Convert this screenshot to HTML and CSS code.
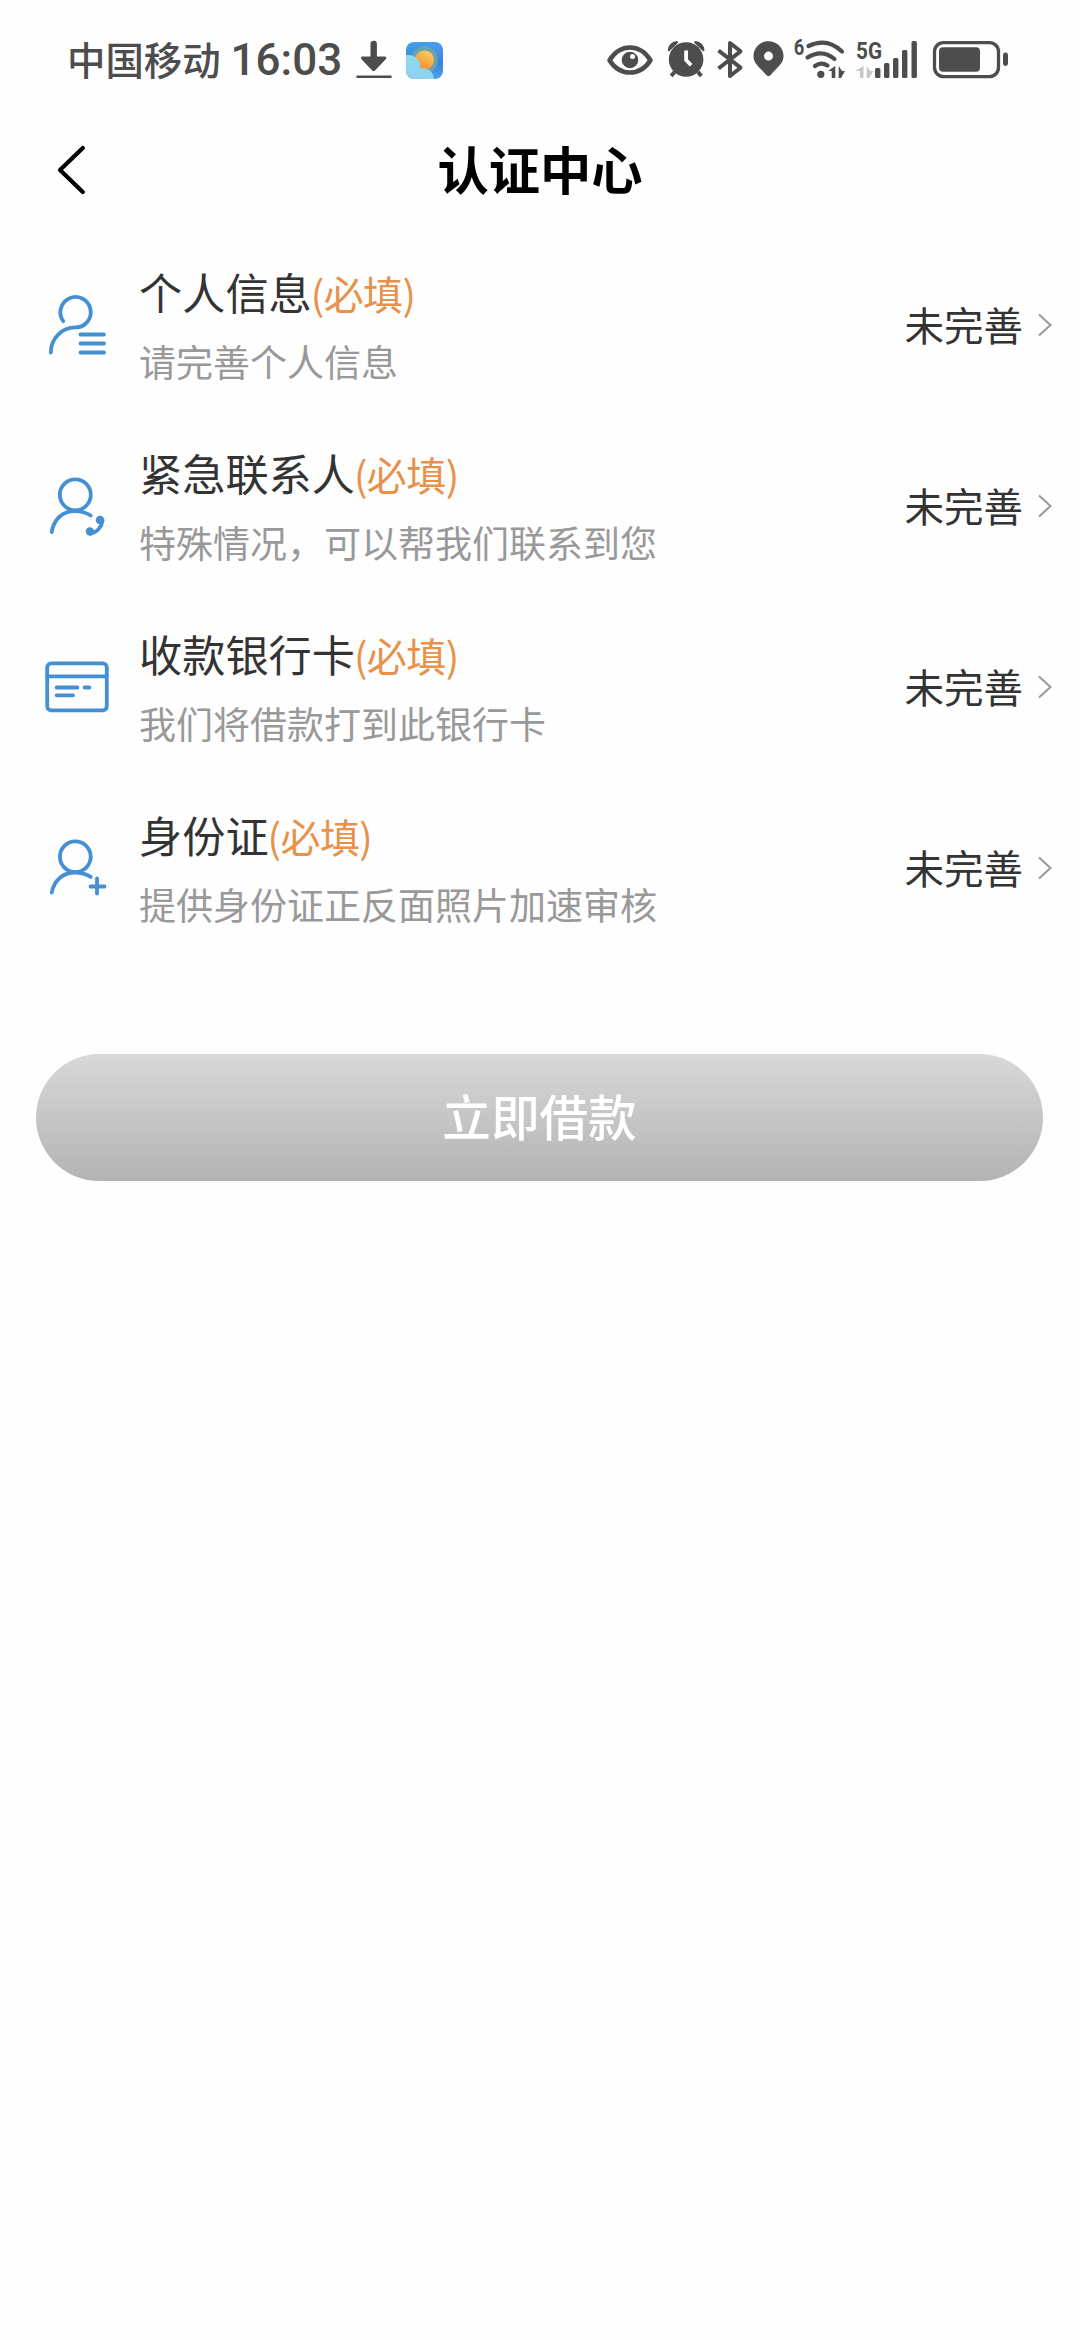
FILE: index.html
```html
<!DOCTYPE html>
<html lang="zh-CN">
<head>
<meta charset="utf-8">
<title>认证中心</title>
<link rel="stylesheet" href="styles.css">
</head>
<body>
<div class="status">
  <span class="carrier">中国移动</span>
  <span class="time">16:03</span>
  <svg class="download" width="36" height="42" viewBox="356 38 36 42"><path d="M370.500 44a3.200 3.200 0 0 1 6.400 0V56.500h8q2.500.5.800 2.800L375 70.500q-1.400 1.300-2.800 0L361.500 59.300q-1.500-2.400.8-2.800h8.200z" fill="#4d4d4d"/><path d="M356.500 76.700h35" stroke="#4d4d4d" stroke-width="2.400"/></svg>
  <svg class="weather" width="37" height="42" viewBox="406 38 37 42">
    <defs>
      <linearGradient id="sky" x1="0" y1="0" x2="0" y2="1"><stop offset="0" stop-color="#45a0e8"/><stop offset=".6" stop-color="#3c82dc"/><stop offset="1" stop-color="#4aa4ef"/></linearGradient>
      <linearGradient id="sun" x1=".8" y1="0" x2=".3" y2="1"><stop offset="0" stop-color="#f6d264"/><stop offset="1" stop-color="#f58a2c"/></linearGradient>
      <linearGradient id="cloud" x1="0" y1="0" x2="0" y2="1"><stop offset="0" stop-color="#8cdcec"/><stop offset="1" stop-color="#8fd0f0"/></linearGradient>
      <clipPath id="tile"><rect x="406" y="42" width="37" height="37" rx="8"/></clipPath>
    </defs>
    <g clip-path="url(#tile)"><rect x="406" y="42" width="37" height="37" fill="url(#sky)"/><circle cx="424.500" cy="60" r="13.500" fill="#77a99f" opacity=".75"/><circle cx="424.500" cy="60" r="9.500" fill="url(#sun)"/><path d="M406 55c9-1 15 5 14.500 13.500C428 67 433.500 72 434 79h-28z" fill="url(#cloud)"/></g>
  </svg>
  <span class="spacer"></span>
  <svg class="eye" width="46" height="42" viewBox="607.500 38 46 42"><path d="M610 60.200C614 54 621 47.500 630.500 47.500S647 54 651 60.200C647 66.500 640 72.500 630.500 72.500S614 66.500 610 60.200z" fill="none" stroke="#4d4d4d" stroke-width="4.600" stroke-linejoin="round"/><circle cx="630.500" cy="60" r="8.300" fill="#4d4d4d"/><circle cx="633" cy="56.500" r="2.500" fill="#fff"/></svg>
  <svg class="alarm" width="38" height="42" viewBox="667.500 38 38 42"><g fill="#4d4d4d"><path d="M668.300 50.500a9.500 9.500 0 0 1 9.500-9.500l1 1.600-9.300 8.900zM705 50.500a9.500 9.500 0 0 0-9.500-9.500l-1 1.600 9.300 8.900z"/><circle cx="686.600" cy="59.500" r="17.300"/></g><path d="M675 72l-3.300 4M698.500 72l3.300 4" stroke="#4d4d4d" stroke-width="4"/><path d="M686.600 50.500v9.500l5 5.300" fill="none" stroke="#fff" stroke-width="3.800"/></svg>
  <svg class="bluetooth" width="26" height="42" viewBox="717.500 38 26 42"><path d="M719 50.500L741 67.700 730.500 76V43L741 51.300 719 68.500" fill="none" stroke="#4d4d4d" stroke-width="4" stroke-linejoin="round"/></svg>
  <svg class="pin" width="31" height="42" viewBox="753.500 38 31 42"><path fill-rule="evenodd" d="M769 41.300c-8.400 0-15 6.500-15 14.800C754 64 760 67 766.300 74.500q2.700 3 5.400 0C778 67 784 64 784 56.100c0-8.300-6.600-14.800-15-14.800zM769 51.600a4.500 4.500 0 1 1 0 9 4.500 4.500 0 0 1 0-9z" fill="#4d4d4d"/></svg>
  <svg class="wifi" width="52" height="50" viewBox="795 34 52 50"><text class="net" x="794.700" y="55.300" font-size="22" textLength="10.600" lengthAdjust="spacingAndGlyphs">6</text><g fill="none" stroke="#4d4d4d" stroke-width="4.200" stroke-linecap="round"><path d="M809.500 46Q828 37 843 51.500M808.500 57.500Q823 48.500 835.500 59M816 66Q822 61.500 828.500 65.500"/></g><circle cx="821.800" cy="74.300" r="3.600" fill="#4d4d4d"/><path d="M836.300 66v12h-3.600v-7h-3.700zM839.700 66v12h2.300l4-7h-3z" fill="#4d4d4d"/></svg>
  <svg class="signal" width="63" height="50" viewBox="856 34 63 50"><text class="net" x="857" y="59" font-size="24.500" textLength="26" lengthAdjust="spacingAndGlyphs">5G</text><path d="M864.500 66v12h-3.600v-7H856zM867.700 66v12h2.300l4.500-7h-3z" fill="#c8c8c8"/><g fill="#4d4d4d"><rect x="876" y="68" width="5.400" height="10" rx="1.500"/><rect x="885" y="63" width="5.400" height="15" rx="1.500"/><rect x="894" y="58" width="5.400" height="20" rx="1.500"/><rect x="903" y="50" width="5.400" height="28" rx="1.500"/><rect x="912.500" y="41" width="5.400" height="37" rx="1.500"/></g></svg>
  <svg class="battery" width="76" height="42" viewBox="934 38 76 42"><rect x="935.500" y="42.600" width="64" height="34" rx="9" fill="none" stroke="#4d4d4d" stroke-width="3.300"/><rect x="940" y="47.300" width="41" height="24.400" rx="4" fill="#4d4d4d"/><rect x="1004" y="52.500" width="5" height="13.500" rx="2.400" fill="#4d4d4d"/></svg>
</div>

<header class="nav">
  <svg class="back" width="30" height="50" viewBox="57 145 30 50"><path d="M82.800 148L60 170l22.800 22" fill="none" stroke="#000" stroke-width="4.200" stroke-linecap="round" stroke-linejoin="round"/></svg>
  <h1>认证中心</h1>
</header>

<main>
  <section class="row">
    <svg class="icon" width="76" height="76" viewBox="40 287.500 76 76"><path d="M63.300 320.700A15.200 15.200 0 1 1 76 326.900C62 326.500 50.800 338 50.800 352"/><path d="M80.500 334h23.500M80.500 343h23.500M80.500 352h23.500"/></svg>
    <div class="info"><h2>个人信息<em>(必填)</em></h2><p>请完善个人信息</p></div>
    <span class="state">未完善</span>
    <svg class="more" width="14" height="24" viewBox="0 0 14 24"><path d="M1 1.500L12.500 12 1 22.500"/></svg>
  </section>
  <section class="row">
    <svg class="icon" width="76" height="76" viewBox="40 468.500 76 76"><circle cx="75.300" cy="494.300" r="15.500"/><path d="M51.700 531.500C54 518 63 510.600 75 510.600q9 0 15.700 4.400"/><path d="M102.500 520C102 526 97 532 91 533"/><circle class="solid" cx="100" cy="519.500" r="4.300"/><circle class="solid" cx="89.900" cy="531" r="4.200"/></svg>
    <div class="info"><h2>紧急联系人<em>(必填)</em></h2><p>特殊情况，可以帮我们联系到您</p></div>
    <span class="state">未完善</span>
    <svg class="more" width="14" height="24" viewBox="0 0 14 24"><path d="M1 1.500L12.500 12 1 22.500"/></svg>
  </section>
  <section class="row">
    <svg class="icon" width="76" height="76" viewBox="40 649.500 76 76"><rect x="47.200" y="662.900" width="59.600" height="46.900" rx="4"/><path d="M47.200 675.800h59.600M56.600 687h20.800M84.600 687h4.800M56.600 694.800h16.500"/></svg>
    <div class="info"><h2>收款银行卡<em>(必填)</em></h2><p>我们将借款打到此银行卡</p></div>
    <span class="state">未完善</span>
    <svg class="more" width="14" height="24" viewBox="0 0 14 24"><path d="M1 1.500L12.500 12 1 22.500"/></svg>
  </section>
  <section class="row">
    <svg class="icon" width="76" height="76" viewBox="40 830.500 76 76"><circle cx="75.300" cy="856.200" r="15.400"/><path d="M51.700 892C54 880 63 872 75 872q9 0 15.700 4.400M97 878v15M90.500 886h14"/></svg>
    <div class="info"><h2>身份证<em>(必填)</em></h2><p>提供身份证正反面照片加速审核</p></div>
    <span class="state">未完善</span>
    <svg class="more" width="14" height="24" viewBox="0 0 14 24"><path d="M1 1.500L12.500 12 1 22.500"/></svg>
  </section>
  <button class="submit" type="button">立即借款</button>
</main>
</body>
</html>
```
FILE: styles.css
```css
* { box-sizing: border-box; margin: 0; padding: 0; }
body {
  width: 1080px;
  min-height: 2340px;
  background: #fefefe;
  color: #333;
  font-family: "Noto Sans CJK SC", sans-serif;
}
svg { display: block; flex: none; overflow: visible; }
.status {
  display: flex;
  align-items: center;
  height: 118px;
  padding: 0 71px 0 67px;
  color: #4d4d4d;
}
.carrier { padding-bottom: 3px; font-size: 38.4px; font-weight: 500; line-height: 60px; }
.time { margin-left: 10px; padding-top: 2px; width: 113px; font: 500 44px/60px Roboto, sans-serif; }
.download { margin-left: 12px; }
.weather { margin-left: 14px; }
.spacer { flex: 1; }
.alarm { margin-left: 14px; }
.bluetooth { margin-left: 12px; }
.pin { margin-left: 10px; }
.wifi { margin-left: 10.5px; }
.signal { margin-left: 9px; }
.battery { margin-left: 15px; }
.net { font-family: Roboto, sans-serif; font-weight: 700; fill: #4d4d4d; }

.nav {
  display: grid;
  grid-template-columns: 1fr auto 1fr;
  align-items: center;
  height: 104px;
  padding: 0 57px;
}
.nav h1 { padding-bottom: 5px; color: #000; font-size: 51.3px; font-weight: 700; line-height: 76px; }

main { padding-top: 13px; }
.row {
  display: flex;
  align-items: center;
  height: 181px;
  padding: 0 28px 0 40px;
}
.icon { fill: none; stroke: #4590d2; stroke-width: 3.8; stroke-linecap: round; stroke-linejoin: round; }
.icon .solid { fill: #4590d2; stroke: none; }
.info { flex: 1; margin-left: 23px; padding-bottom: 5px; white-space: nowrap; }
.info h2 { font-size: 43.2px; font-weight: 400; line-height: 64px; }
.info em { margin-left: -1px; color: #e8914a; font-size: 40px; font-style: normal; letter-spacing: -0.6px; }
.info p { color: #999; font-size: 37px; line-height: 54px; margin-top: 9px; }
.state { padding-bottom: 4px; font-size: 39.5px; line-height: 60px; }
.more { margin-left: 15px; margin-bottom: 2px; fill: none; stroke: #999; stroke-width: 2; }
.submit {
  display: block;
  width: 1007px;
  height: 127px;
  margin: 95px 0 0 36px;
  padding-bottom: 5px;
  border: 0;
  border-radius: 64px;
  background: linear-gradient(#d8d8d8, #b3b3b3);
  color: #fff;
  font: 500 48.6px/72px "Noto Sans CJK SC", sans-serif;
}
```
